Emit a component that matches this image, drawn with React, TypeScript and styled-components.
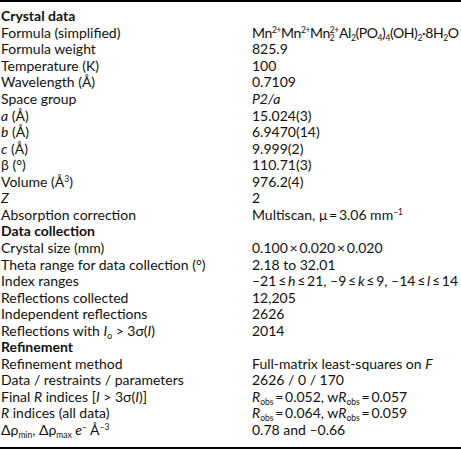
import { FunctionComponent, ReactNode } from 'react'
import styled, { createGlobalStyle } from 'styled-components'

const GlobalStyle = createGlobalStyle`
  body {
    margin: 0;
    background: #fff;
    color: #111;
    font-family: Lato, "Open Sans", sans-serif;
  }
`

const Table = styled.div`
  width: 461px;
  display: grid;
  grid-template-columns: 252px 1fr;
  grid-auto-rows: 16.56px;
  padding: 6.3px 0 8px;
  border-top: 2px solid #000;
  border-bottom: 2px solid #000;
  font-size: 14px;
  line-height: 16.56px;
  white-space: nowrap;
`

const Label = styled.div`
  padding-left: 1px;
`

const Value = styled.div<{ $tight?: boolean }>`
  letter-spacing: ${p => (p.$tight ? '-0.4px' : '0')};
`

const Heading = styled.div`
  grid-column: 1 / span 2;
  font-weight: 700;
  padding-left: 1px;
`

const Sup = styled.sup`
  font-size: 8.5px;
  line-height: 0;
  vertical-align: 5px;
`

const Sub = styled.sub`
  font-size: 8.5px;
  line-height: 0;
  vertical-align: -3px;
`

const Stack = styled.span`
  display: inline-flex;
  flex-direction: column;
  vertical-align: 5px;
  font-size: 8.5px;
  line-height: 8px;
`

const I = styled.i``

interface IRowProps {
  label: ReactNode
  value?: ReactNode
  tight?: boolean
}

const Row: FunctionComponent<IRowProps> = ({ label, value, tight }) => (
  <>
    <Label>{label}</Label>
    <Value $tight={tight}>{value}</Value>
  </>
)

const SupSub: FunctionComponent<{ sup: string; sub: string }> = ({ sup, sub }) => (
  <Stack>
    <span>{sup}</span>
    <span>{sub}</span>
  </Stack>
)

const T = '\u2009'

const formula = (
  <>
    Mn<Sup>2+</Sup>Mn<Sup>2+</Sup>Mn
    <SupSub sup="2+" sub="2" />
    Al<Sub>2</Sub>(PO<Sub>4</Sub>)<Sub>4</Sub>(OH)<Sub>2</Sub>·8H<Sub>2</Sub>O
  </>
)

export default function App() {
  return (
    <>
      <GlobalStyle />
      <Table>
        <Heading>Crystal data</Heading>
        <Row label="Formula (simplified)" value={formula} tight />
        <Row label="Formula weight" value="825.9" />
        <Row label="Temperature (K)" value="100" />
        <Row label="Wavelength (Å)" value="0.7109" />
        <Row label="Space group" value={<I>P2/a</I>} />
        <Row label={<><I>a</I> (Å)</>} value="15.024(3)" />
        <Row label={<><I>b</I> (Å)</>} value="6.9470(14)" />
        <Row label={<><I>c</I> (Å)</>} value="9.999(2)" />
        <Row label="β (°)" value="110.71(3)" />
        <Row label={<>Volume (Å<Sup>3</Sup>)</>} value="976.2(4)" />
        <Row label={<I>Z</I>} value="2" />
        <Row
          label="Absorption correction"
          value={<>Multiscan, μ{T}={T}3.06 mm<Sup>–1</Sup></>}
        />
        <Heading>Data collection</Heading>
        <Row label="Crystal size (mm)" value={`0.100${T}×${T}0.020${T}×${T}0.020`} />
        <Row label="Theta range for data collection (°)" value="2.18 to 32.01" />
        <Row
          label="Index ranges"
          value={
            <>
              –21{T}≤{T}<I>h</I>{T}≤{T}21, –9{T}≤{T}<I>k</I>{T}≤{T}9, –14{T}≤{T}<I>l</I>{T}≤{T}14
            </>
          }
        />
        <Row label="Reflections collected" value="12,205" />
        <Row label="Independent reflections" value="2626" />
        <Row
          label={
            <>
              Reflections with <I>I</I>
              <Sub>o</Sub> &gt; 3σ(<I>I</I>)
            </>
          }
          value="2014"
        />
        <Heading>Refinement</Heading>
        <Row
          label="Refinement method"
          value={<>Full-matrix least-squares on <I>F</I></>}
        />
        <Row label="Data / restraints / parameters" value="2626 / 0 / 170" />
        <Row
          label={<>Final <I>R</I> indices [<I>I</I> &gt; 3σ(<I>I</I>)]</>}
          value={
            <>
              <I>R</I>
              <Sub>obs</Sub>{T}={T}0.052, w<I>R</I>
              <Sub>obs</Sub>{T}={T}0.057
            </>
          }
        />
        <Row
          label={<><I>R</I> indices (all data)</>}
          value={
            <>
              <I>R</I>
              <Sub>obs</Sub>{T}={T}0.064, w<I>R</I>
              <Sub>obs</Sub>{T}={T}0.059
            </>
          }
        />
        <Row
          label={
            <>
              Δρ<Sub>min</Sub>, Δρ<Sub>max</Sub> <I>e</I>
              <Sup>–</Sup> Å<Sup>–3</Sup>
            </>
          }
          value="0.78 and –0.66"
        />
      </Table>
    </>
  )
}
